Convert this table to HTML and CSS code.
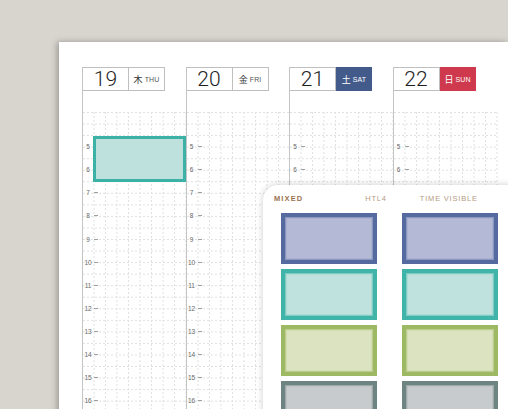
FILE: index.html
```html
<!DOCTYPE html>
<html>
<head>
<meta charset="utf-8">
<link rel="stylesheet" href="styles.css">
</head>
<body>
<div class="page">
  <div class="days">
    <div class="day">
      <div class="head"><span class="num">19</span><span class="dow"><span class="kj">木</span>THU</span></div>
      <div class="body">
        <div class="hours">
          <div class="hour"><span class="hl">5</span><span class="dash"></span></div>
          <div class="hour"><span class="hl">6</span><span class="dash"></span></div>
          <div class="hour"><span class="hl">7</span><span class="dash"></span></div>
          <div class="hour"><span class="hl">8</span><span class="dash"></span></div>
          <div class="hour"><span class="hl">9</span><span class="dash"></span></div>
          <div class="hour"><span class="hl">10</span><span class="dash"></span></div>
          <div class="hour"><span class="hl">11</span><span class="dash"></span></div>
          <div class="hour"><span class="hl">12</span><span class="dash"></span></div>
          <div class="hour"><span class="hl">13</span><span class="dash"></span></div>
          <div class="hour"><span class="hl">14</span><span class="dash"></span></div>
          <div class="hour"><span class="hl">15</span><span class="dash"></span></div>
          <div class="hour"><span class="hl">16</span><span class="dash"></span></div>
        </div>
      </div>
      <div class="block"></div>
    </div>
    <div class="day">
      <div class="head"><span class="num">20</span><span class="dow"><span class="kj">金</span>FRI</span></div>
      <div class="body">
        <div class="hours">
          <div class="hour"><span class="hl">5</span><span class="dash"></span></div>
          <div class="hour"><span class="hl">6</span><span class="dash"></span></div>
          <div class="hour"><span class="hl">7</span><span class="dash"></span></div>
          <div class="hour"><span class="hl">8</span><span class="dash"></span></div>
          <div class="hour"><span class="hl">9</span><span class="dash"></span></div>
          <div class="hour"><span class="hl">10</span><span class="dash"></span></div>
          <div class="hour"><span class="hl">11</span><span class="dash"></span></div>
          <div class="hour"><span class="hl">12</span><span class="dash"></span></div>
          <div class="hour"><span class="hl">13</span><span class="dash"></span></div>
          <div class="hour"><span class="hl">14</span><span class="dash"></span></div>
          <div class="hour"><span class="hl">15</span><span class="dash"></span></div>
          <div class="hour"><span class="hl">16</span><span class="dash"></span></div>
        </div>
      </div>
    </div>
    <div class="day">
      <div class="head"><span class="num">21</span><span class="dow sat"><span class="kj">土</span>SAT</span></div>
      <div class="body">
        <div class="hours">
          <div class="hour"><span class="hl">5</span><span class="dash"></span></div>
          <div class="hour"><span class="hl">6</span><span class="dash"></span></div>
        </div>
      </div>
    </div>
    <div class="day">
      <div class="head"><span class="num">22</span><span class="dow sun"><span class="kj">日</span>SUN</span></div>
      <div class="body">
        <div class="hours">
          <div class="hour"><span class="hl">5</span><span class="dash"></span></div>
          <div class="hour"><span class="hl">6</span><span class="dash"></span></div>
        </div>
      </div>
    </div>
  </div>
</div>

<div class="sheet">
  <div class="sheet-head">
    <span class="t-mixed">MIXED</span>
    <span class="t-htl">HTL4</span>
    <span class="t-time">TIME VISIBLE</span>
  </div>
  <div class="stickers">
    <div class="stk blue"></div><div class="stk blue"></div>
    <div class="stk teal"></div><div class="stk teal"></div>
    <div class="stk green"></div><div class="stk green"></div>
    <div class="stk grey"></div><div class="stk grey"></div>
  </div>
</div>
</body>
</html>
```

FILE: styles.css
```css
html, body {
  margin: 0;
  padding: 0;
}
body {
  width: 508px;
  height: 409px;
  overflow: hidden;
  background: #d8d4ce;
  font-family: "Liberation Sans", Arial, sans-serif;
  position: relative;
}
.page {
  margin: 42px 0 0 59px;
  height: 380px;
  background: #fff;
  box-shadow: -2px 0 6px rgba(0,0,0,0.28);
  overflow: hidden;
}
.days {
  display: grid;
  grid-template-columns: 103.5px 103.5px 103.5px 1fr;
  margin-left: 23px;
  width: 416px;
  padding-top: 25px;
}
.day {
  position: relative;
  border-left: 1px solid #c4c4c4;
  display: flex;
  flex-direction: column;
}
.head {
  display: flex;
  width: 81px;
  height: 22px;
  border: 1px solid #bfbfbf;
  border-left: 0;
}
.num {
  width: 45px;
  border-right: 1px solid #bfbfbf;
  text-align: center;
  font-family: Roboto, "Liberation Sans", sans-serif;
  font-weight: 300;
  font-size: 21px;
  line-height: 22px;
  color: #1e1e1e;
}
.dow {
  flex: 1;
  display: flex;
  align-items: center;
  justify-content: center;
  font-size: 7px;
  color: #555;
  letter-spacing: 0.1px;
}
.kj {
  font-family: "Noto Sans CJK JP", sans-serif;
  font-size: 9px;
  margin-right: 2px;
  color: #333;
}
.dow.sat, .dow.sun {
  margin: -1px -1px -1px 0;
  color: #fff;
}
.dow.sat .kj, .dow.sun .kj { color: #fff; }
.dow.sat { background: #435b8b; }
.dow.sun { background: #ce394d; }

.body {
  --g: #dde1e1;
  margin-top: 21px;
  height: 300px;
  background-image:
    conic-gradient(from 270deg at 2px 1px, var(--g) 25%, transparent 0),
    conic-gradient(from 270deg at 1px 2px, var(--g) 25%, transparent 0);
  background-size: 4px 11.55px, 11.5px 4px;
  background-position: 0 0, -1px 0;
}
.hours {
  padding-top: 23.1px;
}
.hour {
  height: 23.1px;
  display: flex;
  align-items: center;
}
.hl {
  width: 8px;
  margin-left: 1px;
  text-align: center;
  font-size: 6.5px;
  color: #666;
  letter-spacing: -0.2px;
}
.dash {
  width: 4px;
  height: 1px;
  margin-left: 2px;
  background: #a0a0a0;
}
.block {
  position: absolute;
  left: 10px;
  top: 68.5px;
  width: 86.7px;
  height: 40.3px;
  border: 3px solid #3cb1a6;
  background: #bfe1de;
}

.sheet {
  position: absolute;
  left: 263px;
  top: 185px;
  width: 260px;
  height: 240px;
  background: #fff;
  border-radius: 15px 0 0 0;
  box-shadow: 0 0 7px rgba(0,0,0,0.2);
}
.sheet-head {
  display: flex;
  padding: 10px 0 0 11px;
  height: 8px;
  line-height: 8px;
  font-size: 7.5px;
  letter-spacing: 0.8px;
  color: #b49a82;
}
.t-mixed {
  font-weight: bold;
  letter-spacing: 1.1px;
  color: #9a7353;
}
.t-htl { margin-left: 62px; }
.t-time { margin-left: 33px; }

.stickers {
  display: grid;
  grid-template-columns: 96.5px 96.5px;
  column-gap: 24.5px;
  row-gap: 5.3px;
  padding: 10px 0 0 17.7px;
}
.stk {
  height: 42.7px;
  border: 4px solid;
}
.stk.blue { border-color: #556a9f; background: #b4b9d5; box-shadow: inset 0 0 0 1.3px #8c97c2; }
.stk.teal { border-color: #41b4a9; background: #c0e2df; box-shadow: inset 0 0 0 1.3px #80cbc3; }
.stk.green { border-color: #9eb964; background: #dbe3c0; box-shadow: inset 0 0 0 1.3px #bccd8e; }
.stk.grey { border-color: #6e8482; background: #c8cbcd; box-shadow: inset 0 0 0 1.3px #9eaaa9; }
```
